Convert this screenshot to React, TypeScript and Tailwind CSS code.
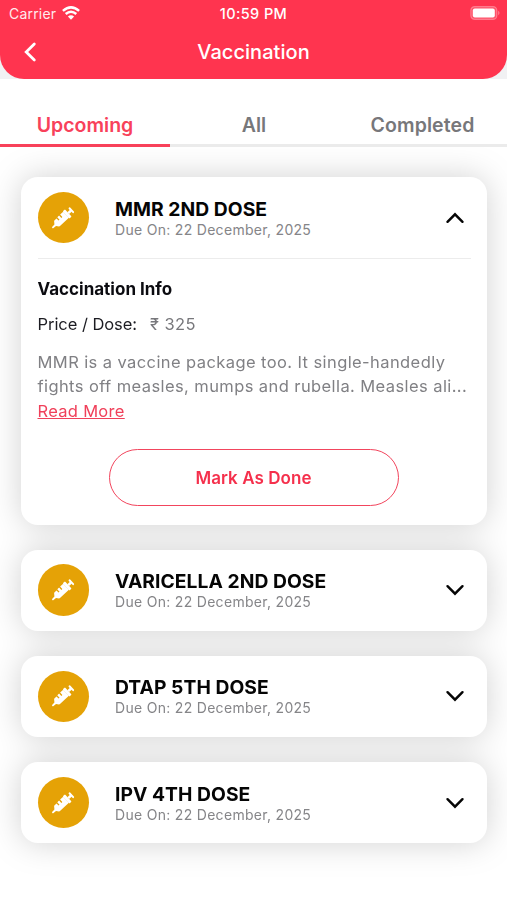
import React from "react";

const doses = [
  { name: "MMR 2ND DOSE", due: "22 December, 2025", open: true },
  { name: "VARICELLA 2ND DOSE", due: "22 December, 2025", open: false },
  { name: "DTAP 5TH DOSE", due: "22 December, 2025", open: false },
  { name: "IPV 4TH DOSE", due: "22 December, 2025", open: false },
];

function Syringe() {
  return (
    <svg width="30" height="30" viewBox="-15.5 -15 31 30" fill="white">
      <g transform="rotate(-43)">
        <path d="M-15 -0.8 L-11 -1.2 L-9 -3.8 Q-8.6 -4.2 -8 -4.2 H-5.2 V-1.2 H-3.8 V-4.6 H-1.2 V-1.2 H0.2 V-4.6 H4.6 V4 H-8 Q-8.6 4 -9 3.6 L-11 1.2 L-15 0.8 Z" />
        <rect x="4.4" y="-5.2" width="3.2" height="10.2" rx="0.9" />
        <rect x="7.4" y="-1.3" width="4" height="2.6" />
        <rect x="10.8" y="-3.6" width="2" height="7.2" rx="0.8" />
      </g>
    </svg>
  );
}

function Chevron({ up }: { up: boolean }) {
  return (
    <svg width="20" height="12" viewBox="0 0 20 12" fill="none" stroke="#050505" strokeWidth="2.4" strokeLinecap="round" strokeLinejoin="miter">
      <path d={up ? "M2.5 9.8 L10 2.3 L17.5 9.8" : "M2.5 2.2 L10 9.7 L17.5 2.2"} />
    </svg>
  );
}

function StatusBar() {
  return (
    <div className="grid h-7 grid-cols-3 items-center text-white">
      <div className="flex items-center gap-[6px] pl-[9px]">
        <span className="text-[14px] leading-none tracking-[0.2px] opacity-90">Carrier</span>
        <svg className="-mt-0.5" width="18" height="14" viewBox="0 0 18 14" fill="none" stroke="white" strokeWidth="2.5">
          <path d="M0.9 4.9 Q9 -2.1 17.1 4.9" />
          <path d="M3.7 8 Q9 3.4 14.3 8" />
          <path d="M9 13.7 L5.9 10.4 Q9 7.9 12.1 10.4 Z" fill="white" stroke="none" />
        </svg>
      </div>
      <div className="pt-px text-center text-[14.5px] font-medium leading-none tracking-[0.4px]">10:59 PM</div>
      <div className="flex justify-end pr-[6px]">
        <svg className="-mt-0.5" width="31" height="14" viewBox="0 0 31 14">
          <rect x="0.8" y="0.6" width="26" height="12.8" rx="3.8" fill="#ffffff" fillOpacity="0.15" stroke="white" strokeOpacity="0.3" strokeWidth="1.2" />
          <rect x="2.8" y="2.6" width="22" height="8.8" rx="2" fill="white" />
          <path d="M28.4 4.8 Q30.4 7 28.4 9.2 Z" fill="white" fillOpacity="0.5" />
        </svg>
      </div>
    </div>
  );
}

function Details() {
  return (
    <div className="ml-[17px] mr-4 border-t border-[#ececec]">
      <h3 className="mt-[19px] text-[17px] font-bold leading-[22px] text-[#0b0b10]">Vaccination Info</h3>
      <div className="mt-[13px] flex items-center text-[16.5px] leading-[22px]">
        <span className="tracking-[-0.05px] text-[#1c1c22]">Price / Dose:</span>
        <span className="ml-[13px] tracking-[0.4px] text-[#77777b]">₹ 325</span>
      </div>
      <p className="mt-[15px] whitespace-nowrap text-[16.5px] leading-[24.4px] tracking-[0.41px] text-[#808084]">
        MMR is a vaccine package too. It single-handedly
        <br />
        fights off measles, mumps and rubella. Measles ali...
        <br />
        <a className="tracking-[0.3px] text-[#f0405a] underline">Read More</a>
      </p>
      <button className="ml-[71px] mt-[26px] flex h-[57px] w-[290px] items-center justify-center rounded-full border border-[#f2455d] pt-0.5 text-[17px] font-semibold tracking-[0.05px] text-[#f5304c]">
        Mark As Done
      </button>
    </div>
  );
}

export default function App() {
  return (
    <div className="flex h-[900px] w-[507px] flex-col overflow-hidden bg-white font-['Inter','Noto_Sans',sans-serif]">
      <div className="bg-[linear-gradient(to_bottom,#ff344f_50%,#f1f1f3_50%)]">
        <header className="h-[79px] rounded-b-[24px] bg-[#ff344f]">
          <StatusBar />
          <div className="grid h-12 grid-cols-3 items-center text-white">
            <svg className="ml-[22px]" width="16" height="22" viewBox="0 0 16 22" fill="none" stroke="white" strokeWidth="2.8" strokeLinecap="round">
              <path d="M12.3 2.9 L4.2 11 L12.3 19.1" />
            </svg>
            <h1 className="text-center text-[20px] font-medium leading-none tracking-[0.05px]">Vaccination</h1>
          </div>
        </header>
      </div>
      <nav className="grid h-[68px] grid-cols-[170px_168px_169px] text-center text-[19.5px] font-semibold text-[#77777a]">
        <div className="border-b-[3px] border-[#f8415a] pt-[32px] text-[#f8415a]">Upcoming</div>
        <div className="border-b-[3px] border-[#ebebeb] pt-[32px]">All</div>
        <div className="border-b-[3px] border-[#ebebeb] pt-[32px] tracking-[0.1px]">Completed</div>
      </nav>
      <main className="grow overflow-hidden pl-[20.5px] pr-5 pt-[30px]">
        <div className="flex flex-col gap-[25.2px] drop-shadow-[0_0_16px_rgba(0,0,0,0.18)]">
          {doses.map((d) => (
            <section key={d.name} className={d.open ? "h-[347.5px] rounded-[17px] bg-white" : "h-[81px] rounded-[17px] bg-white"}>
              <div className="flex h-[81px] items-center pl-[17px] pr-[22px]">
                <div className="flex size-[51.5px] items-center justify-center rounded-full bg-[#e5a206]">
                  <Syringe />
                </div>
                <div className="ml-[26px] grow pt-px">
                  <h2 className="text-[19.3px] font-bold leading-[23px] tracking-[0.04px] text-[#050505]">{d.name}</h2>
                  <p className="-mt-px text-[14px] leading-[19px] tracking-[0.3px] text-[#858588]">Due On: {d.due}</p>
                </div>
                <Chevron up={d.open} />
              </div>
              {d.open && <Details />}
            </section>
          ))}
        </div>
      </main>
    </div>
  );
}
